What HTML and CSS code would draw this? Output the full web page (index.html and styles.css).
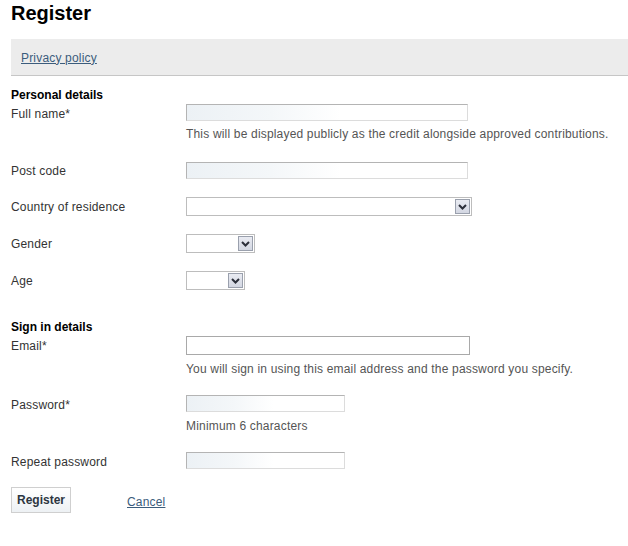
FILE: index.html
```html
<!DOCTYPE html>
<html>
<head>
<meta charset="utf-8">
<link rel="stylesheet" href="styles.css">
</head>
<body>
<div class="page">
  <h1 class="title">Register</h1>
  <div class="bar"><a href="#" class="link">Privacy policy</a></div>

  <form class="form">
    <div class="section">Personal details</div>
    <div class="row row-hint1">
      <label class="label label-low">Full name*</label>
      <div class="field">
        <span class="input w-name"></span>
        <div class="hint hint1">This will be displayed publicly as the credit alongside approved contributions.</div>
      </div>
    </div>
    <div class="row">
      <label class="label">Post code</label>
      <div class="field"><span class="input w-name"></span></div>
    </div>
    <div class="row">
      <label class="label label-sel">Country of residence</label>
      <div class="field">
        <span class="select w-country"><span class="select-btn"><svg width="9" height="6" viewBox="0 0 9 6"><path d="M1 1 L4.5 4.5 L8 1" fill="none" stroke="#2b2f3a" stroke-width="2"/></svg></span></span>
      </div>
    </div>
    <div class="row">
      <label class="label label-sel">Gender</label>
      <div class="field">
        <span class="select w-gender"><span class="select-btn"><svg width="9" height="6" viewBox="0 0 9 6"><path d="M1 1 L4.5 4.5 L8 1" fill="none" stroke="#2b2f3a" stroke-width="2"/></svg></span></span>
      </div>
    </div>
    <div class="row row-last">
      <label class="label label-sel">Age</label>
      <div class="field">
        <span class="select w-age"><span class="select-btn"><svg width="9" height="6" viewBox="0 0 9 6"><path d="M1 1 L4.5 4.5 L8 1" fill="none" stroke="#2b2f3a" stroke-width="2"/></svg></span></span>
      </div>
    </div>

    <div class="section">Sign in details</div>
    <div class="row row-email">
      <label class="label label-sel">Email*</label>
      <div class="field">
        <span class="input input-plain w-email"></span>
        <div class="hint hint2">You will sign in using this email address and the password you specify.</div>
      </div>
    </div>
    <div class="row row-pass">
      <label class="label label-low">Password*</label>
      <div class="field">
        <span class="input w-pass"></span>
        <div class="hint hint3">Minimum 6 characters</div>
      </div>
    </div>
    <div class="row">
      <label class="label label-low">Repeat password</label>
      <div class="field"><span class="input w-pass"></span></div>
    </div>

    <div class="actions">
      <button type="button" class="btn">Register</button>
      <a href="#" class="link cancel">Cancel</a>
    </div>
  </form>
</div>
</body>
</html>
```

FILE: styles.css
```css
* { box-sizing: border-box; }
html, body { margin: 0; padding: 0; background: #fff; }
body {
  font-family: "Liberation Sans", Arial, sans-serif;
  font-size: 12px;
  color: #333;
}
.page { padding-left: 11px; }
.title {
  margin: 0;
  padding-top: 1px;
  font-size: 20px;
  line-height: 24px;
  font-weight: bold;
  color: #000;
}
.bar {
  margin-top: 14px;
  height: 37px;
  background: #ececec;
  border-bottom: 1px solid #c6c6c6;
  padding-left: 10px;
  padding-top: 1px;
  display: flex;
  align-items: center;
}
.link {
  color: #3b5c7c;
  text-decoration: underline;
  font-size: 12px;
  letter-spacing: 0.18px;
}
.form { padding-top: 12px; }
.section {
  font-weight: bold;
  color: #000;
  line-height: 14px;
  margin-bottom: 2px;
}
.row {
  display: grid;
  grid-template-columns: 175px 1fr;
  align-items: start;
  margin-bottom: 18px;
}
.row-hint1 { margin-bottom: 21px; }
.row-last { margin-bottom: 30px; }
.row-email { margin-bottom: 19px; }
.row-pass { margin-bottom: 20px; }
.label {
  color: #333;
  line-height: 15px;
  padding-top: 2px;
  letter-spacing: 0.18px;
}
.label-low { line-height: 14px; padding-top: 3px; }
.label-sel { line-height: 17px; padding-top: 2px; }
.field { display: flex; flex-direction: column; align-items: flex-start; }
.input {
  display: block;
  height: 17px;
  border: 1px solid #dcdcdc;
  border-top-color: #b4b4b4;
  border-left-color: #b4b4b4;
  background: linear-gradient(to right, #ecf1f5 0%, #f4f7f9 30%, #ffffff 55%);
}
.input-plain {
  height: 19px;
  border: 1px solid #a9a9a9;
  background: #fff;
}
.w-name { width: 282px; }
.w-email { width: 284px; }
.w-pass { width: 159px; }
.hint {
  line-height: 14px;
  color: #555;
  letter-spacing: 0.18px;
}
.hint1 { margin-top: 6px; }
.hint2 { margin-top: 7px; }
.hint3 { margin-top: 7px; }
.row-pass { margin-bottom: 19px; }
.select {
  display: flex;
  justify-content: flex-end;
  align-items: center;
  height: 19px;
  border: 1px solid #bdbdbd;
  background: #fff;
  padding-right: 1px;
}
.w-country { width: 286px; }
.w-gender { width: 69px; }
.w-age { width: 59px; }
.select-btn {
  width: 15px;
  height: 15px;
  border: 1px solid #9aa0ad;
  background: linear-gradient(#e9ebf2, #d3d7e2);
  display: flex;
  align-items: center;
  justify-content: center;
}
.select-btn svg { display: block; }
.actions {
  display: flex;
  align-items: center;
  gap: 56px;
  margin-top: 1px;
}
.btn {
  width: 60px;
  height: 26px;
  padding: 0;
  font-family: "Liberation Sans", Arial, sans-serif;
  font-size: 12px;
  font-weight: bold;
  color: #2c3641;
  border: 1px solid #cfcfcf;
  background: linear-gradient(#ffffff, #edf1f4);
}
.cancel { line-height: 14px; padding-top: 3px; }
```
